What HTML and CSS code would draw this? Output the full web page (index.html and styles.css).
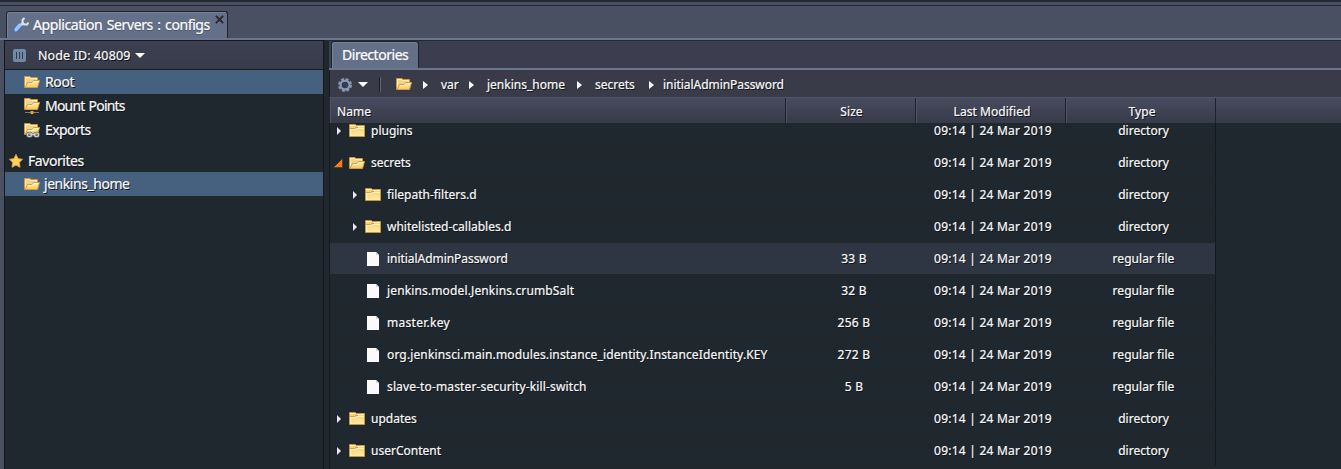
FILE: index.html
```html
<!DOCTYPE html>
<html lang="en">
<head>
<meta charset="utf-8">
<title>Application Servers : configs</title>
<link rel="stylesheet" href="styles.css">
</head>
<body>
<svg width="0" height="0" class="defs">
  <defs>
    <linearGradient id="gold" x1="0" y1="0" x2="0" y2="1"><stop offset="0" stop-color="#fff0a6"/><stop offset="1" stop-color="#f5c868"/></linearGradient>
    <linearGradient id="pale" x1="0" y1="0" x2="0" y2="1"><stop offset="0" stop-color="#f3cb78"/><stop offset="1" stop-color="#fdee9e"/></linearGradient>
    <symbol id="open" viewBox="0 0 16 16">
      <path d="M.5 13.500v-11H6l1 1h6.500V7" fill="#f6d287" stroke="#cf943a"/>
      <path d="M1.500 13V3.500H5.500L6.500 4.500H12.500V6" fill="none" stroke="#fff0bd"/>
      <path d="M1 13.500 3.500 8.500H8l1.500-2h6L13.500 13.500Z" fill="url(#gold)" stroke="#d79c40"/>
      <path d="M4 9.500h4.500l1.500-2h4.500" fill="none" stroke="#fffacb"/>
    </symbol>
    <symbol id="closed" viewBox="0 0 16 16">
      <path d="M.5 13.500v-12H6.500l1 1h8v11Z" fill="url(#pale)" stroke="#cf923a"/>
      <path d="M1 2.500h5M8 3.500h7M1.500 6.500h5l1-1h7.500M1.500 6v7" fill="none" stroke="#fff3c4"/>
      <path d="M1 5.500h4.500l1.500-1h2" fill="none" stroke="#d49b45"/>
    </symbol>
    <symbol id="file" viewBox="0 0 12 14"><path d="M0 0h9l3 3v11H0Z" fill="#fafafa"/><path d="M9 0v3h3" fill="#d4d5d6"/></symbol>
  </defs>
</svg>
<div class="app">
  <div class="topline"></div>
  <div class="tabs">
    <div class="tab main-tab">
      <svg class="wrench" viewBox="0 0 16 16"><path d="M3 13 7 8.500" stroke="#4a72b5" stroke-width="5.500" stroke-linecap="round"/><path d="M3 12.700 7 8" stroke="#9cc4f6" stroke-width="3.500" stroke-linecap="round"/><path d="m8 8 3-2.500" stroke="#d2d7dc" stroke-width="2.500"/><path d="M11.500 1 9.500 3v3l1.500 1.500h3l1.500-2" fill="none" stroke="#dfe2e5" stroke-width="2"/></svg>
      <span>Application Servers : configs</span>
      <svg class="close" viewBox="0 0 10 10"><path d="m1 1 8 8M9 1 1 9" stroke="#2a2627" stroke-width="2.200"/></svg>
    </div>
  </div>
  <div class="work">
    <aside class="side">
      <div class="node"><svg class="nodeicon" viewBox="0 0 13 13"><rect width="13" height="13" rx="2" fill="#7189a5"/><path d="M3.500 3v7M6.500 3v7M9.500 3v7" stroke="#35394a"/></svg><span>Node ID: 40809</span><i class="down"></i></div>
      <div class="nav selected"><svg class="folder"><use href="#open"/></svg><span>Root</span></div>
      <div class="nav"><svg class="folder" viewBox="0 0 16 16"><use href="#open" y="-2" width="16" height="16"/><path d="M1 14.500h14" stroke="#777f84"/><path d="M6.500 13h3v3h-3z" fill="#e5a52d"/></svg><span class="mounts">Mount Points</span></div>
      <div class="nav"><svg class="folder" viewBox="0 0 16 16"><use href="#open" y="-1" width="16" height="16"/><g fill="none" stroke="#666a70" stroke-width="2.600"><rect x="3.500" y="11" width="4" height="3.500" rx="1.500"/><rect x="10.500" y="11" width="4" height="3.500" rx="1.500"/></g><g fill="none" stroke="#d6d8dc" stroke-width="1.200"><rect x="3.500" y="11" width="4" height="3.500" rx="1.500"/><rect x="10.500" y="11" width="4" height="3.500" rx="1.500"/><path d="M6.500 12.700h5"/></g></svg><span class="exports">Exports</span></div>
      <div class="favorites"><svg class="star" viewBox="0 0 14 14"><path d="m7 .5 2 4.200 4.500.6-3.300 3.200.8 4.700L7 11l-4 2.200.8-4.700L.5 5.300 5 4.700Z" fill="#ffd45a" stroke="#e9a83a"/></svg><span>Favorites</span></div>
      <div class="nav selected"><svg class="folder"><use href="#open"/></svg><span class="home">jenkins_home</span></div>
    </aside>
    <main class="content">
      <div class="subtabs"><div class="tab subtab"><span>Directories</span></div></div>
      <div class="toolbar">
        <svg class="gear" viewBox="0 0 14 14"><circle cx="7" cy="7" r="5.700" fill="none" stroke="#8396b1" stroke-width="2.600" stroke-dasharray="2.800 1.677"/><circle cx="7" cy="7" r="4.400" fill="none" stroke="#8699b4" stroke-width="2.200"/></svg>
        <i class="down"></i><b class="sep"></b>
        <svg class="folder"><use href="#open"/></svg>
        <i class="right c1"></i><span class="var">var</span><i class="right c2"></i><span class="jh">jenkins_home</span><i class="right c3"></i><span class="sec">secrets</span><i class="right c4"></i><span class="iap">initialAdminPassword</span>
      </div>
      <div class="row head"><div class="name">Name</div><div class="size">Size</div><div class="date"><span>Last Modified</span></div><div class="type">Type</div></div>
      <div class="list"><div class="rows">
        <div class="row"><div class="name"><i class="right"></i><svg class="folder"><use href="#closed"/></svg><span>plugins</span></div><div class="size"></div><div class="date"><span>09:14 | 24 Mar 2019</span></div><div class="type">directory</div></div>
        <div class="row"><div class="name"><svg class="expanded" viewBox="0 0 10 10"><path d="M.5 9.500h9V.5Z" fill="#f47b20" stroke="#3c241b" stroke-width=".5"/></svg><svg class="folder"><use href="#open"/></svg><span>secrets</span></div><div class="size"></div><div class="date"><span>09:14 | 24 Mar 2019</span></div><div class="type">directory</div></div>
        <div class="row"><div class="name child"><i class="right"></i><svg class="folder"><use href="#closed"/></svg><span>filepath-filters.d</span></div><div class="size"></div><div class="date"><span>09:14 | 24 Mar 2019</span></div><div class="type">directory</div></div>
        <div class="row"><div class="name child"><i class="right"></i><svg class="folder"><use href="#closed"/></svg><span>whitelisted-callables.d</span></div><div class="size"></div><div class="date"><span>09:14 | 24 Mar 2019</span></div><div class="type">directory</div></div>
        <div class="row current"><div class="name leaf"><svg class="file"><use href="#file"/></svg><span class="iap">initialAdminPassword</span></div><div class="size">33 B</div><div class="date"><span>09:14 | 24 Mar 2019</span></div><div class="type">regular file</div></div>
        <div class="row"><div class="name leaf"><svg class="file"><use href="#file"/></svg><span class="wide">jenkins.model.Jenkins.crumbSalt</span></div><div class="size">32 B</div><div class="date"><span>09:14 | 24 Mar 2019</span></div><div class="type">regular file</div></div>
        <div class="row"><div class="name leaf"><svg class="file"><use href="#file"/></svg><span class="key">master.key</span></div><div class="size">256 B</div><div class="date"><span>09:14 | 24 Mar 2019</span></div><div class="type">regular file</div></div>
        <div class="row"><div class="name leaf"><svg class="file"><use href="#file"/></svg><span class="wide">org.jenkinsci.main.modules.instance_identity.InstanceIdentity.KEY</span></div><div class="size">272 B</div><div class="date"><span>09:14 | 24 Mar 2019</span></div><div class="type">regular file</div></div>
        <div class="row"><div class="name leaf"><svg class="file"><use href="#file"/></svg><span class="wide">slave-to-master-security-kill-switch</span></div><div class="size">5 B</div><div class="date"><span>09:14 | 24 Mar 2019</span></div><div class="type">regular file</div></div>
        <div class="row"><div class="name"><i class="right"></i><svg class="folder"><use href="#closed"/></svg><span>updates</span></div><div class="size"></div><div class="date"><span>09:14 | 24 Mar 2019</span></div><div class="type">directory</div></div>
        <div class="row"><div class="name"><i class="right"></i><svg class="folder"><use href="#closed"/></svg><span>userContent</span></div><div class="size"></div><div class="date"><span>09:14 | 24 Mar 2019</span></div><div class="type">directory</div></div>
      </div></div>
    </main>
  </div>
</div>
</body>
</html>
```
FILE: styles.css
```css
* { box-sizing: border-box; }
body { margin: 0; background: #485062; font: 12px/16px "Noto Sans", "DejaVu Sans Condensed", sans-serif; color: #f8f8f8; text-shadow: 1px 1px 0 #11151a; -webkit-text-stroke: .2px; overflow: hidden; }
svg { display: block; flex: none; }
span { white-space: nowrap; }
.defs { position: absolute; }
.app { height: 469px; display: flex; flex-direction: column; }
.topline { height: 6px; background: #485062; border-top: 2px solid #222b33; border-bottom: 1px solid #282437; }
.tabs { height: 34px; padding: 5px 0 0 6px; border-bottom: 2px solid #68768e; display: flex; }
.tab { background: #647087; border: 1px solid #1e242b; border-bottom: 0; border-radius: 3px 3px 0 0; box-shadow: inset 1px 1px 0 #748198; display: flex; align-items: center; color: #fff; }
.main-tab { width: 222px; height: 27px; padding-left: 6px; font-size: 14px; letter-spacing: -.4px; word-spacing: 1.2px; text-shadow: 0 1px 0 #495267; }
.wrench { width: 16px; height: 16px; margin-right: 4px; }
.close { width: 9px; height: 9px; margin: -11px 0 0 auto; position: relative; right: 3px; }
.work { flex: 1; min-height: 0; display: flex; padding-left: 4px; }
.side { width: 320px; background: #20282f; border: 1px solid #17171c; border-bottom: 0; }
.node { height: 29px; background: linear-gradient(#3d4052, #383b48); border-bottom: 1px solid #1a1b20; display: flex; align-items: center; padding-left: 8px; font-size: 12.5px; letter-spacing: .12px; }
.nodeicon { width: 13px; height: 13px; margin-right: 12px; }
.node span { padding-top: 1px; }
.down { width: 0; height: 0; border: 5px solid transparent; border-top-color: #fff; border-bottom: 0; margin-left: 5px; }
.nav { height: 24px; padding-left: 19px; display: flex; align-items: center; gap: 5px; font-size: 14px; letter-spacing: -.4px; }
.mounts { letter-spacing: -.8px; word-spacing: 1.2px; }
.exports { letter-spacing: -.6px; }
.selected { background: #466180; }
.folder { width: 16px; height: 16px; }
.favorites { height: 30px; padding: 7px 0 0 4px; display: flex; align-items: center; gap: 5px; font-size: 14px; letter-spacing: -.45px; }
.star { width: 14px; height: 14px; }
.home { margin-left: -1px; letter-spacing: -.45px; }
.content { width: 1017px; padding-left: 5px; background: #20282f; border-top: 1px solid #252936; display: flex; flex-direction: column; min-width: 0; }
.subtabs { height: 29px; padding-left: 2px; background: #3c3e4f; border-bottom: 2px solid #68768e; }
.subtab { width: 88px; height: 27px; padding-left: 10px; font-size: 14px; letter-spacing: -.47px; text-shadow: none; }
.toolbar { height: 28px; background: #393b48; border-left: 1px solid #171b21; border-bottom: 1px solid #505366; display: flex; align-items: center; padding: 2px 0 0 8px; }
.toolbar .folder { margin-top: -1px; }
.gear { width: 14px; height: 14px; }
.toolbar .down { margin-left: 6px; }
.sep { width: 2px; height: 15px; margin: 0 15px 0 11px; background: #1d1e25; border-right: 1px solid #626474; }
.right { width: 0; height: 0; border: 4px solid transparent; border-left: 5px solid #fff; border-right: 0; flex: none; }
.toolbar .c1 { margin: 0 13px 0 11px; }
.var { width: 28px; }
.jh { width: 90px; }
.sec { width: 54px; }
.toolbar .c2, .toolbar .c3 { margin-right: 13px; }
.toolbar .c4 { margin-right: 9px; }
.iap { letter-spacing: -.05px; }
.toolbar .iap { padding-top: 1px; }
.wide { letter-spacing: .135px; }
.key { letter-spacing: .28px; }
.row { height: 32px; display: grid; grid-template-columns: 456px 130px 150px 150px; width: 886px; border-bottom: 1px solid #272525; }
.row > div { display: flex; align-items: center; justify-content: center; min-width: 0; }
.row > .name { justify-content: flex-start; padding-left: 7px; }
.row > .date { padding-left: 4px; letter-spacing: .23px; }
.row > .type { border-right: 1px solid #15191e; padding-left: 6px; letter-spacing: .04px; }
.row .size { padding-left: 6px; letter-spacing: .25px; }
.list { flex: 1; overflow: hidden; border-left: 1px solid #151a20; }
.rows { margin-top: -8px; width: 886px; }
.row .right { margin-right: 8px; border-left-width: 4px; border-left-color: #e8e8f2; }
.row .folder { margin-right: 6px; }
.row .expanded { width: 10px; height: 10px; margin: 0 6px 0 -4px; }
.row > .child { padding-left: 23px; }
.row > .leaf { padding-left: 37px; }
.file { width: 12px; height: 14px; margin-right: 8px; }
.current { background: #2d3642; }
.row.head { width: auto; height: 25px; background: linear-gradient(#484c60, #373a48); border: 0; border-left: 1px solid #242633; flex: none; }
.row.head > div { border-right: 1px solid #20212d; box-shadow: inset 1px 0 #515365; padding-top: 2px; letter-spacing: .05px; }
.row.head > .size { padding-left: 2px; }
.row.head > .date { padding-left: 3px; }
.row.head > .type { padding-left: 3px; }
```
